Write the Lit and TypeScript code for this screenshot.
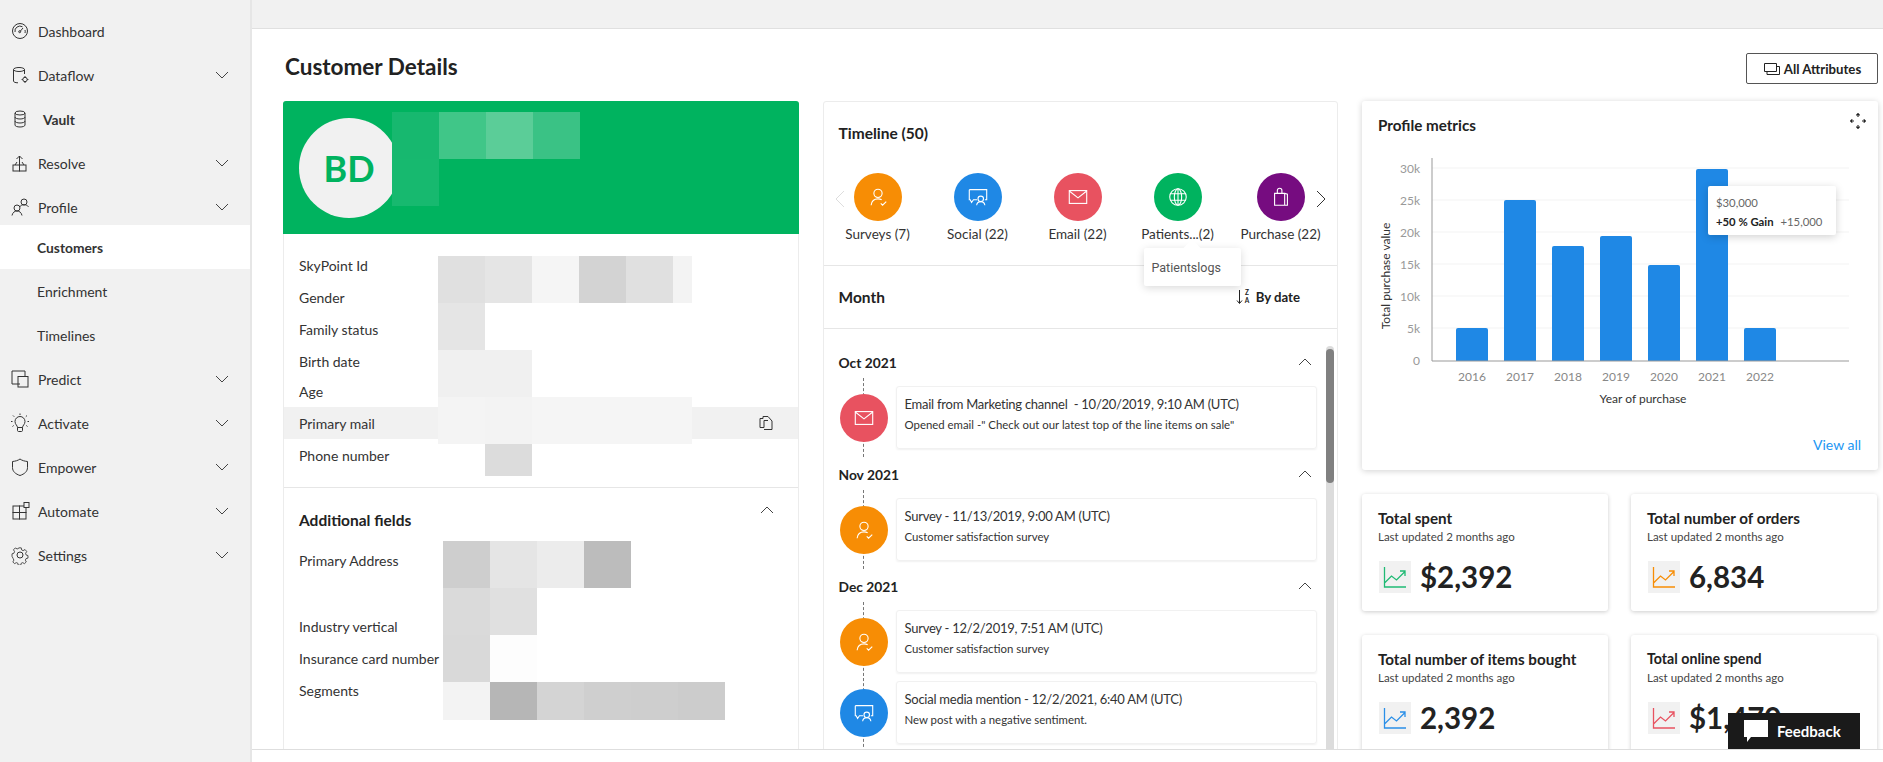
import { LitElement, html, css, svg } from 'lit';
import { customElement } from 'lit/decorators.js';

const chevDown = html`<svg class="chev" width="14" height="8" viewBox="0 0 14 8"><path d="M1 1l6 6 6-6" fill="none" stroke="#444" stroke-width="1"/></svg>`;
const chevUp = html`<svg class="chev" width="14" height="8" viewBox="0 0 14 8"><path d="M1 7l6-6 6 6" fill="none" stroke="#444" stroke-width="1"/></svg>`;

const navIcons: Record<string, unknown> = {
  gauge: svg`<circle cx="10" cy="10" r="7.500"/><path d="M5 11a5 5 0 0 1 7.500-5.200M15 9a5 5 0 0 1 0 3M10 10.500l3-3.500"/><circle cx="9.700" cy="10.700" r="1"/>`,
  dataflow: svg`<ellipse cx="9" cy="4.500" rx="5.500" ry="2"/><path d="M3.500 4.500V16c0 1 1.500 1.800 4.500 1.800M14.500 4.500V9"/><circle cx="15" cy="14.500" r="2.200"/><path d="M15 11v1.200M15 16.800V18M11.600 14.500h1.200M17.200 14.500h1.200"/>`,
  vault: svg`<ellipse cx="10" cy="4" rx="5" ry="2"/><path d="M5 4v12c0 1.200 2.200 2 5 2s5-.8 5-2V4M5 8c0 1.200 2.200 2 5 2s5-.8 5-2M5 12c0 1.200 2.200 2 5 2s5-.8 5-2"/>`,
  resolve: svg`<rect x="3" y="12" width="6.500" height="6"/><rect x="9.500" y="12" width="6.500" height="6"/><path d="M9.500 12V3M6.500 6l3-3 3 3M5 12l2-3M14 12l-2-3"/>`,
  profile: svg`<circle cx="14" cy="5" r="3"/><path d="M9.500 10c1-1.600 2.700-2.200 4.500-2.200 2 0 3.500.6 4.500 2"/><circle cx="7" cy="11" r="3"/><path d="M2 18.500c.6-3 2.600-4.500 5-4.500s4.400 1.500 5 4.500"/>`,
  predict: svg`<path d="M10 15H2V2h13v5"/><rect x="8" y="7.500" width="10" height="10.500"/>`,
  activate: svg`<path d="M7.500 14.500c0-2-2.500-3-2.500-6a5 5 0 0 1 10 0c0 3-2.500 4-2.500 6zM7.500 14.500v3c0 .6.500 1 1 1h3c.5 0 1-.4 1-1v-3M10 .5v1.500M3 2.500l1.200 1.200M17 2.500l-1.200 1.200M1 8.500h1.500M17.500 8.500H19M2.500 13.500l1.200-1M17.500 13.500l-1.200-1"/>`,
  shield: svg`<path d="M10 2c2 1.500 4.500 2.200 7.500 2.500v6c0 4-3 6.500-7.500 8-4.500-1.500-7.500-4-7.500-8v-6C5.500 4.200 8 3.500 10 2z"/>`,
  automate: svg`<rect x="3" y="5" width="6.500" height="6.500"/><rect x="9.500" y="5" width="6.500" height="6.500"/><rect x="3" y="11.500" width="6.500" height="6.500"/><rect x="9.500" y="11.500" width="6.500" height="6.500"/><rect x="14" y="1.500" width="5" height="5" fill="#f1f1f1"/>`,
  gear: svg`<circle cx="10" cy="10" r="3"/><path d="M8.500 1.500h3l.5 2.500 1.700.8 2.300-1.300 2 2.300-1.300 2.200.5 1.900 2.300.8v3l-2.300.6-.8 1.800 1.100 2.200-2.200 2-2.100-1.200-1.700.7-.6 2.300h-3l-.5-2.300-1.800-.7-2.100 1.200-2-2 1.200-2.200-.8-1.800L.5 11.600v-3l2.300-.7.700-1.900-1.200-2.200 2.100-2.200 2.200 1.200 1.700-.7z" transform="scale(.84) translate(1.900 1.900)"/>`,
};

const nav = [
  { label: 'Dashboard', icon: 'gauge' },
  { label: 'Dataflow', icon: 'dataflow', more: true },
  { label: 'Vault', icon: 'vault', strong: true },
  { label: 'Resolve', icon: 'resolve', more: true },
  { label: 'Profile', icon: 'profile', more: true },
  { label: 'Customers', sub: true, active: true },
  { label: 'Enrichment', sub: true },
  { label: 'Timelines', sub: true },
  { label: 'Predict', icon: 'predict', more: true },
  { label: 'Activate', icon: 'activate', more: true },
  { label: 'Empower', icon: 'shield', more: true },
  { label: 'Automate', icon: 'automate', more: true },
  { label: 'Settings', icon: 'gear', more: true },
];

const kindIcons: Record<string, unknown> = {
  survey: svg`<circle cx="12" cy="8" r="4.500"/><path d="M4.500 21c.5-4.500 3.500-7 7.500-7 1.500 0 2.800.3 4 1M15 19l2 2 4-4"/>`,
  social: svg`<path d="M2.500 4h19v11h-2M11 15H7l-2 3-1.500-3h-1V4"/><circle cx="15" cy="14" r="3"/><path d="M10.500 21c.4-2.600 2.200-4 4.500-4s4.100 1.400 4.500 4"/>`,
  email: svg`<rect x="2.500" y="5" width="19" height="14"/><path d="M2.500 5.500l9.500 7.500 9.500-7.500"/>`,
  globe: svg`<circle cx="12" cy="12" r="9"/><ellipse cx="12" cy="12" rx="4" ry="9"/><path d="M3.500 8.500h17M3.500 15.500h17M12 3v18"/>`,
  bag: svg`<path d="M5 8h11v13H5zM16 8l3 1v12h-3M8 8V5c0-1.500 1-2.500 2.500-2.500S13 3.500 13 5v3"/>`,
};

const kinds: Record<string, string> = { survey: '#f78d05', social: '#1f88e5', email: '#e85260', globe: '#00b35f', bag: '#760c80' };

const carousel = [
  { kind: 'survey', label: 'Surveys (7)' },
  { kind: 'social', label: 'Social (22)' },
  { kind: 'email', label: 'Email (22)' },
  { kind: 'globe', label: 'Patients...(2)' },
  { kind: 'bag', label: 'Purchase (22)' },
];

const months = [
  { name: 'Oct 2021', items: [{ kind: 'email', title: 'Email from Marketing channel\u00a0 - 10/20/2019, 9:10 AM (UTC)', text: 'Opened email -" Check out our latest top of the line items on sale"' }] },
  { name: 'Nov 2021', items: [{ kind: 'survey', title: 'Survey - 11/13/2019, 9:00 AM (UTC)', text: 'Customer satisfaction survey' }] },
  { name: 'Dec 2021', items: [
    { kind: 'survey', title: 'Survey - 12/2/2019, 7:51 AM (UTC)', text: 'Customer satisfaction survey' },
    { kind: 'social', title: 'Social media mention - 12/2/2021, 6:40 AM (UTC)', text: 'New post with a negative sentiment.' },
  ] },
];

const fields = ['SkyPoint Id', 'Gender', 'Family status', 'Birth date', 'Age', 'Primary mail', 'Phone number'];

const stats = [
  { title: 'Total spent', value: '$2,392', color: '#1fba74' },
  { title: 'Total number of orders', value: '6,834', color: '#f78d05' },
  { title: 'Total number of items bought', value: '2,392', color: '#2a8fe8' },
  { title: 'Total online spend', value: '$1,470', color: '#e85260', small: true },
];

const bars = [
  { year: '2016', top: 328 },
  { year: '2017', top: 200 },
  { year: '2018', top: 246 },
  { year: '2019', top: 236 },
  { year: '2020', top: 265 },
  { year: '2021', top: 169 },
  { year: '2022', top: 328 },
];

// redaction blocks, each row is [height, [colours]], empty colour leaves a gap
type Cell = string | [string, number];
const headMosaic: [number, Cell[]][] = [
  [47, ['#17b86f', '#40c688', '#5bcd98', '#3ac285']],
  [47, ['#17b96f']],
];
const fieldMosaic: [number, Cell[]][] = [
  [47, ['#e0e0e0', '#e5e5e5', '#f5f5f5', '#d3d3d3', '#e0e0e0', ['#f3f3f3', 19]]],
  [47, ['#e5e5e5']],
  [47, ['#f0f0f0', '#f0f0f0']],
  [47, ['#f4f4f4', '#f3f3f3', '#f5f5f5', '#f5f5f5', '#f5f5f5', ['#f5f5f5', 19]]],
  [32, ['', '#dcdcdc']],
];
const addrMosaic: [number, Cell[]][] = [
  [47, ['#cecece', '#e5e5e5', '#ececec', '#bcbcbc']],
  [47, ['#dadada', '#e0e0e0']],
  [47, ['#d9d9d9', '#fdfdfd']],
  [38, ['#f3f3f3', '#b6b6b6', '#d4d4d4', '#cfcfcf', '#cecece', '#cccccc']],
];

@customElement('app-root')
export class AppRoot extends LitElement {
  static styles = css`
    :host {
      display: grid;
      grid-template-columns: 252px minmax(0, 1fr);
      grid-template-rows: minmax(0, 1fr);
      height: 100vh;
      overflow: hidden;
      font-family: 'Lato', 'Liberation Sans', sans-serif;
      color: #222;
      font-size: 14px;
      position: relative;
    }
    .side {
      background: #f1f1f1;
      border-right: 2px solid #e6e6e6;
      padding-top: 9px;
      box-sizing: border-box;
    }
    .nav {
      height: 44px;
      display: flex;
      align-items: center;
      padding: 0 21px 0 10px;
      gap: 8px;
      color: #333;
    }
    .nav svg.ic {
      width: 20px;
      height: 20px;
      fill: none;
      stroke: #333;
      stroke-width: 1;
      flex: none;
    }
    .nav span { flex: 1; }
    .nav.strong span { font-weight: 700; font-size: 13.800px; padding-left: 5px; }
    .nav.sub { padding-left: 37px; }
    .nav.active { background: #fff; font-weight: 700; font-size: 13.800px; margin-top: -4px; }
    .main {
      display: flex;
      flex-direction: column;
      min-width: 0;
      min-height: 0;
    }
    .top {
      height: 28px;
      background: #f1f1f1;
      border-bottom: 1px solid #e0e0e0;
      flex: none;
    }
    .content {
      flex: 1;
      min-height: 0;
      overflow: hidden;
      padding: 0 5px 0 31px;
    }
    .foot {
      height: 12px;
      border-top: 1px solid #dedede;
      flex: none;
    }
    .page-head {
      height: 72px;
      display: flex;
      align-items: center;
      justify-content: space-between;
    }
    h1 { font-size: 22.500px; font-weight: 700; margin: 2px 0 0 2px; color: #222; }
    .attrs {
      width: 132px;
      height: 31px;
      box-sizing: border-box;
      border: 1px solid #555;
      border-radius: 2px;
      display: flex;
      align-items: center;
      justify-content: center;
      gap: 3px;
      font-weight: 700;
      font-size: 13.200px;
      background: #fff;
      align-self: flex-start;
      margin-top: 24px;
    }
    .cols {
      display: grid;
      grid-template-columns: 1fr 1fr 1fr;
      gap: 24px;
      align-items: start;
    }
    .card {
      background: #fff;
      border: 1px solid #ececec;
      border-radius: 3px;
      box-sizing: border-box;
      position: relative;
    }
    .customer { height: 660px; }
    .banner {
      height: 133px;
      margin: -1px -1px 0;
      background: #00b35f;
      border-radius: 3px 3px 0 0;
      display: flex;
      align-items: center;
      padding-left: 16px;
    }
    .avatar {
      width: 100px;
      height: 100px;
      border-radius: 50%;
      background: #f1f1f1;
      color: #00b35f;
      font-size: 36px;
      font-weight: 700;
      display: flex;
      align-items: center;
      justify-content: center;
    }
    .mosaic { position: absolute; }
    .mosaic.head { left: 108px; top: 10px; }
    .mosaic.fld { left: 154px; top: 154px; }
    .mosaic.addr { left: 159px; top: 439px; }
    .m-row { display: flex; }
    .fields { padding: 15px 0 16px; border-bottom: 1px solid #e6e6e6; }
    .row {
      height: 32px;
      display: flex;
      align-items: center;
      justify-content: space-between;
      padding: 0 24px 0 15px;
      color: #333;
    }
    .row.age { margin-top: -2px; }
    .row.hover { background: #f1f1f1; }
    .row.tall { height: 66px; align-items: flex-start; padding-top: 8px; box-sizing: border-box; }
    .copy { width: 16px; height: 16px; fill: none; stroke: #333; }
    .add-head {
      display: flex;
      justify-content: space-between;
      padding: 17px 24px 9px 15px;
      height: 30px;
      align-items: center;
      font-size: 15.500px;
      font-weight: 700;
    }
    .add-head svg { margin-top: -21px; }
    .timeline { height: 660px; }
    .tl-title {
      font-size: 15.500px;
      font-weight: 700;
      padding: 19px 15px 0;
      line-height: 24px;
    }
    .carousel {
      display: flex;
      padding: 28px 0 0 4px;
      height: 92px;
      border-bottom: 1px solid #e6e6e6;
      position: relative;
    }
    .c-item {
      width: 100px;
      display: flex;
      flex-direction: column;
      align-items: center;
      gap: 5px;
      white-space: nowrap;
      color: #333;
      font-size: 13.500px;
    }
    .c-item:nth-child(5) { margin-left: 3px; }
    .dot {
      width: 48px;
      height: 48px;
      border-radius: 50%;
      display: flex;
      align-items: center;
      justify-content: center;
      flex: none;
    }
    .dot svg { width: 22px; height: 22px; fill: none; stroke: #fff; stroke-width: 1.200; }
    .arrow { position: absolute; top: 45px; }
    .arrow.prev { left: 11px; }
    .arrow.next { right: 11px; }
    .tip {
      position: absolute;
      left: 320px;
      top: 146px;
      width: 97px;
      height: 38px;
      background: #fff;
      border-radius: 2px;
      box-shadow: 0 2px 8px rgba(0, 0, 0, 0.15);
      font-family: 'Roboto', sans-serif;
      font-size: 12.500px;
      color: #555;
      display: flex;
      align-items: center;
      padding-left: 8px;
      box-sizing: border-box;
      z-index: 2;
    }
    .tip::before {
      content: '';
      position: absolute;
      left: 42px;
      top: -6px;
      width: 12px;
      height: 12px;
      background: #fff;
      transform: rotate(45deg);
    }
    .tip span { position: relative; }
    .month-bar {
      height: 62px;
      display: flex;
      align-items: center;
      justify-content: space-between;
      padding: 0 37px 0 15px;
      border-bottom: 1px solid #e6e6e6;
      font-size: 15.500px;
      font-weight: 700;
    }
    .by {
      display: flex;
      align-items: center;
      gap: 5px;
      font-size: 13.200px;
    }
    .list { padding: 21px 20px 0 15px; position: relative; }
    .m-head {
      height: 24px;
      display: flex;
      align-items: center;
      justify-content: space-between;
      font-weight: 700;
      font-size: 13.800px;
      margin-bottom: 12px;
    }
    .m-head svg { margin-right: 5px; }
    .group { margin-bottom: 13px; }
    .t-row { display: flex; gap: 8px; }
    .t-row + .t-row { margin-top: 8px; }
    .rail {
      width: 48px;
      flex: none;
      display: flex;
      align-items: center;
      position: relative;
      margin-left: 1px;
    }
    .rail::before {
      content: '';
      position: absolute;
      left: 23px;
      top: -8px;
      bottom: -8px;
      border-left: 1px dashed #777;
    }
    .rail .dot { position: relative; }
    .t-card {
      flex: 1;
      height: 63px;
      box-sizing: border-box;
      border: 1px solid #f1f1f1;
      border-radius: 3px;
      box-shadow: 0 1px 2px rgba(0, 0, 0, 0.06);
      padding: 7px 8px;
    }
    .t-card b { display: block; font-weight: 400; font-size: 13px; letter-spacing: -0.250px; line-height: 20px; color: #333; }
    .t-card small { display: block; font-size: 11.400px; line-height: 18px; margin-top: 2px; color: #333; }
    .bar {
      position: absolute;
      right: 3px;
      top: 244px;
      width: 8px;
      height: 420px;
      background: #dcdcdc;
      border-radius: 4px 4px 0 0;
    }
    .thumb { height: 134px; margin-top: 3px; background: #808080; border-radius: 4px; }
    .right { display: flex; flex-direction: column; gap: 24px; }
    .metrics {
      height: 369px;
      border: none;
      box-shadow: 0 1px 6px rgba(0, 0, 0, 0.18);
    }
    .m-title {
      height: 49px;
      display: flex;
      justify-content: space-between;
      padding: 15px 12px 0 16px;
      box-sizing: border-box;
      font-size: 15.200px;
      font-weight: 700;
    }
    .m-title svg { margin-top: -3px; }
    .metrics svg.chart { display: block; }
    .chart text { font-family: 'Lato', 'Liberation Sans', sans-serif; font-size: 12px; }
    .g-tip {
      position: absolute;
      left: 346px;
      top: 85px;
      width: 128px;
      height: 49px;
      background: #fff;
      border-radius: 2px;
      box-shadow: 0 2px 8px rgba(0, 0, 0, 0.18);
      padding: 7px 8px;
      box-sizing: border-box;
      font-size: 11.300px;
      line-height: 19px;
      color: #666;
      white-space: nowrap;
    }
    .g-tip b { font-weight: 700; color: #222; margin-right: 4px; }
    .view {
      color: #2196f3;
      text-align: right;
      padding: 20px 17px 0 0;
      font-size: 14px;
    }
    .stats {
      display: grid;
      grid-template-columns: 246px 246px;
      column-gap: 23px;
      row-gap: 24px;
    }
    .stat {
      height: 117px;
      padding: 14px 16px;
      box-sizing: border-box;
      border: none;
      box-shadow: 0 1px 4px rgba(0, 0, 0, 0.2);
    }
    .stat h3 { margin: 0; font-size: 15.200px; font-weight: 700; line-height: 20px; }
    .stat h3.small { font-size: 14.200px; }
    .stat p { margin: 0; font-size: 11.500px; line-height: 18px; color: #444; }
    .val { display: flex; align-items: center; gap: 9px; margin-top: 15px; font-size: 29.500px; font-weight: 700; line-height: 32px; }
    .trend { width: 32px; height: 32px; background: #f1f1f1; flex: none; margin-left: 1px; }
    .trend svg { display: block; fill: none; stroke-width: 1.3; }
    .feedback {
      position: absolute;
      left: 1728px;
      top: 713px;
      width: 132px;
      height: 36px;
      background: #1a1a1a;
      color: #fff;
      font-weight: 700;
      font-size: 15px;
      display: flex;
      align-items: center;
      gap: 9px;
      padding-left: 16px;
      box-sizing: border-box;
    }
  `;

  mosaic(name: string, rows: [number, Cell[]][]) {
    return html`<div class="mosaic ${name}">
      ${rows.map(([h, cells]) => html`<div class="m-row" style="height:${h}px">
        ${cells.map((c) => {
          const color = Array.isArray(c) ? c[0] : c;
          const w = Array.isArray(c) ? c[1] : 47;
          return html`<div style="width:${w}px;background:${color || 'transparent'}"></div>`;
        })}
      </div>`)}
    </div>`;
  }

  dot(kind: string) {
    return html`<div class="dot" style="background:${kinds[kind]}"><svg viewBox="0 0 24 24">${kindIcons[kind]}</svg></div>`;
  }

  renderChart() {
    const ticks = [['30k', 168], ['25k', 200], ['20k', 232], ['15k', 264], ['10k', 296], ['5k', 328]] as [string, number][];
    return html`<svg class="chart" width="516" height="266" viewBox="1362 150 516 266">
      ${ticks.map(([t, y]) => svg`
        <line x1="1432" x2="1849" y1=${y} y2=${y} stroke="#f3f3f3"/>
        <text x="1420" y=${y + 5} text-anchor="end" fill="#999">${t}</text>`)}
      <text x="1420" y="365" text-anchor="end" fill="#999">0</text>
      ${bars.map((b, i) => svg`
        <path d="M${1456 + i * 48} 361V${b.top + 2}q0-2 2-2h28q2 0 2 2V361z" fill="#1f88e5"/>
        <text x=${1472 + i * 48} y="381" text-anchor="middle" fill="#888">${b.year}</text>`)}
      <path d="M1432 158V361H1849" fill="none" stroke="#999"/>
      <text x="1643" y="403" text-anchor="middle" fill="#333">Year of purchase</text>
      <text transform="translate(1390 276) rotate(-90)" text-anchor="middle" fill="#333">Total purchase value</text>
    </svg>`;
  }

  render() {
    return html`
      <aside class="side">
        ${nav.map((n) => html`<div class="nav ${n.sub ? 'sub' : ''} ${n.active ? 'active' : ''} ${n.strong ? 'strong' : ''}">
          ${n.icon ? html`<svg class="ic" viewBox="0 0 20 20">${navIcons[n.icon]}</svg>` : ''}
          <span>${n.label}</span>
          ${n.more ? chevDown : ''}
        </div>`)}
      </aside>
      <div class="main">
        <div class="top"></div>
        <div class="content">
          <div class="page-head">
            <h1>Customer Details</h1>
            <div class="attrs">
              <svg width="18" height="14" viewBox="0 0 18 14" fill="none" stroke="#222"><path d="M1.500 1.500h12v8h-12zM4 9.500v3h12.500v-8h-3"/></svg>
              All Attributes
            </div>
          </div>
          <div class="cols">
            <section class="card customer">
              <div class="banner"><div class="avatar">BD</div></div>
              ${this.mosaic('head', headMosaic)}
              <div class="fields">
                ${fields.map((f) => html`<div class="row ${f === 'Age' ? 'age' : ''} ${f === 'Primary mail' ? 'hover' : ''}">
                  <span>${f}</span>
                  ${f === 'Primary mail' ? html`<svg class="copy" viewBox="0 0 16 16"><path d="M5 3.500V1.500h5l4 4.500v8.500H6M5 3.500H2v9h4V5.500h4"/></svg>` : ''}
                </div>`)}
              </div>
              ${this.mosaic('fld', fieldMosaic)}
              <div class="add-head"><span>Additional fields</span>${chevUp}</div>
              <div class="row tall"><span>Primary Address</span></div>
              <div class="row"><span>Industry vertical</span></div>
              <div class="row"><span>Insurance card number</span></div>
              <div class="row"><span>Segments</span></div>
              ${this.mosaic('addr', addrMosaic)}
            </section>

            <section class="card timeline">
              <div class="tl-title">Timeline (50)</div>
              <div class="carousel">
                ${carousel.map((c) => html`<div class="c-item">${this.dot(c.kind)}<span>${c.label}</span></div>`)}
                <svg class="arrow prev" width="10" height="18" viewBox="0 0 10 18"><path d="M9 1L1 9l8 8" fill="none" stroke="#ddd"/></svg>
                <svg class="arrow next" width="10" height="18" viewBox="0 0 10 18"><path d="M1 1l8 8-8 8" fill="none" stroke="#333"/></svg>
              </div>
              <div class="tip"><span>Patientslogs</span></div>
              <div class="month-bar">
                <span>Month</span>
                <span class="by">
                  <svg width="15" height="16" viewBox="0 0 15 16">
                    <path d="M3.500 1v13M1 11.500l2.500 3 2.500-3" fill="none" stroke="#222"/>
                    <text x="11" y="6" font-size="6.500" font-weight="700" text-anchor="middle" fill="#222">Z</text>
                    <text x="11" y="14" font-size="6.500" font-weight="700" text-anchor="middle" fill="#222">A</text>
                  </svg>
                  By date
                </span>
              </div>
              <div class="list">
                ${months.map((m) => html`<div class="group">
                  <div class="m-head"><span>${m.name}</span>${chevUp}</div>
                  ${m.items.map((it) => html`<div class="t-row">
                    <div class="rail">${this.dot(it.kind)}</div>
                    <div class="t-card"><b>${it.title}</b><small>${it.text}</small></div>
                  </div>`)}
                </div>`)}
              </div>
              <div class="bar"><div class="thumb"></div></div>
            </section>

            <div class="right">
              <section class="card metrics">
                <div class="m-title">
                  <span>Profile metrics</span>
                  <svg width="16" height="16" viewBox="0 0 14 14" fill="none" stroke="#222"><path d="M7 .5v3M5.500 2L7 .5 8.500 2M7 13.500v-3M5.500 12L7 13.500 8.500 12M.5 7h3M2 5.500L.5 7 2 8.500M13.500 7h-3M12 5.500L13.500 7 12 8.500"/></svg>
                </div>
                ${this.renderChart()}
                <div class="view">View all</div>
                <div class="g-tip">$30,000<br /><b>+50 % Gain</b> +15,000</div>
              </section>
              <div class="stats">
                ${stats.map((s) => html`<section class="card stat">
                  <h3 class=${s.small ? 'small' : ''}>${s.title}</h3>
                  <p>Last updated 2 months ago</p>
                  <div class="val">
                    <div class="trend"><svg width="32" height="32" viewBox="0 0 32 32" stroke=${s.color}><path d="M5.500 6v20H27M5.500 22l7-7 5 4 8-8M21 10h5v5"/></svg></div>
                    ${s.value}
                  </div>
                </section>`)}
              </div>
            </div>
          </div>
        </div>
        <div class="foot"></div>
      </div>
      <div class="feedback">
        <svg width="24" height="22" viewBox="0 0 24 22"><path d="M0 0h24v17H7l-4 5v-5H0z" fill="#fff"/></svg>
        Feedback
      </div>
    `;
  }
}
